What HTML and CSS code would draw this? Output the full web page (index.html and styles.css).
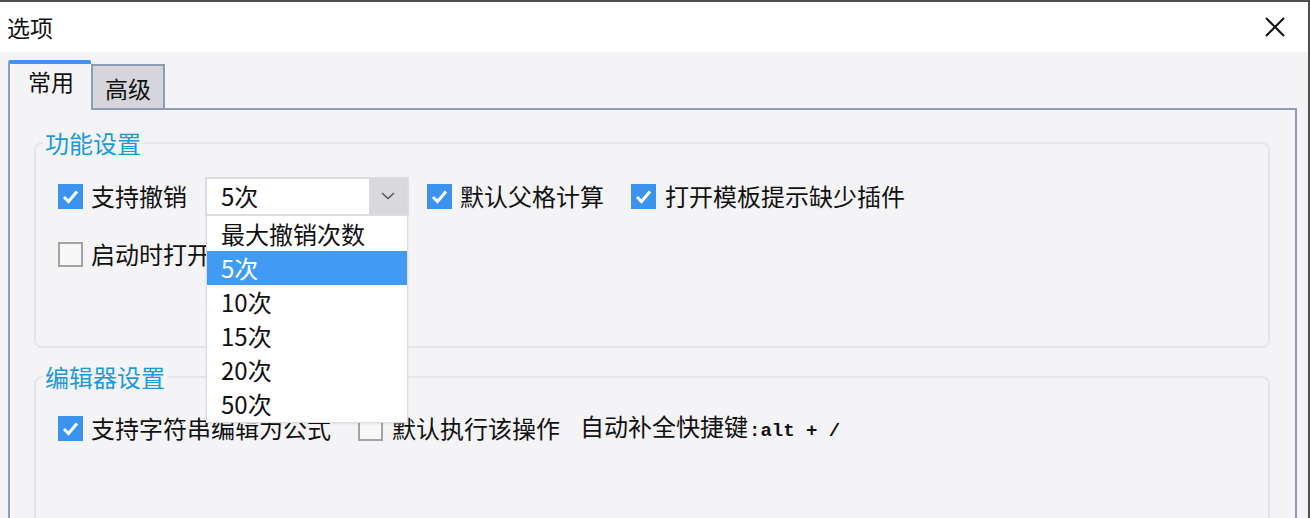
FILE: index.html
```html
<!DOCTYPE html>
<html lang="zh-CN">
<head>
<meta charset="utf-8">
<title>选项</title>
<link rel="stylesheet" href="styles.css">
</head>
<body>
<div class="window">
  <div class="titlebar">
    <span class="title">选项</span>
    <svg class="close" width="20" height="20" viewBox="0 0 20 20"><path d="M1 1 L19 19 M19 1 L1 19" stroke="#111" stroke-width="2" fill="none"/></svg>
  </div>
  <div class="content">
    <div class="tabs">
      <div class="tab tab-active">常用</div>
      <div class="tab tab-inactive">高级</div>
      <div class="tab-fill"></div>
    </div>
    <div class="panel">
      <fieldset class="group group-first">
        <legend>功能设置</legend>
        <div class="group-body body-first">
          <div class="row">
            <span class="cb checked"><svg width="25" height="25" viewBox="0 0 25 25"><path d="M6 13 L10.5 17.5 L19 7.5" stroke="#fff" stroke-width="3" fill="none"/></svg></span>
            <span class="label">支持撤销</span>
            <div class="combo">
              <span class="combo-value">5次</span>
              <span class="combo-arrow"><svg width="14" height="8" viewBox="0 0 14 8"><path d="M1 1 L7 6.5 L13 1" stroke="#555" stroke-width="1.5" fill="none"/></svg></span>
              <ul class="dropdown">
                <li>最大撤销次数</li>
                <li class="selected">5次</li>
                <li>10次</li>
                <li>15次</li>
                <li>20次</li>
                <li>50次</li>
              </ul>
            </div>
            <span class="cb checked gap-18"><svg width="25" height="25" viewBox="0 0 25 25"><path d="M6 13 L10.5 17.5 L19 7.5" stroke="#fff" stroke-width="3" fill="none"/></svg></span>
            <span class="label">默认父格计算</span>
            <span class="cb checked gap-27"><svg width="25" height="25" viewBox="0 0 25 25"><path d="M6 13 L10.5 17.5 L19 7.5" stroke="#fff" stroke-width="3" fill="none"/></svg></span>
            <span class="label label-wide">打开模板提示缺少插件</span>
          </div>
          <div class="row row-second">
            <span class="cb"></span>
            <span class="label">启动时打开最近文件</span>
          </div>
        </div>
      </fieldset>
      <fieldset class="group group-second">
        <legend>编辑器设置</legend>
        <div class="group-body body-second">
          <div class="row">
            <span class="cb checked"><svg width="25" height="25" viewBox="0 0 25 25"><path d="M6 13 L10.5 17.5 L19 7.5" stroke="#fff" stroke-width="3" fill="none"/></svg></span>
            <span class="label">支持字符串编辑为公式</span>
            <span class="cb gap-27"></span>
            <span class="label label-wide">默认执行该操作</span>
            <span class="label shortcut">自动补全快捷键<span class="mono">:alt + /</span></span>
          </div>
        </div>
      </fieldset>
    </div>
  </div>
</div>
</body>
</html>
```

FILE: styles.css
```css
html, body {
  margin: 0;
  padding: 0;
  background: #f4f4f6;
}

body {
  font-family: "Noto Sans CJK SC", "Noto Sans", sans-serif;
  color: #111;
}

.window {
  width: 1310px;
  height: 518px;
  box-sizing: border-box;
  border-top: 2px solid #4f4f4f;
  border-right: 2px solid #4f4f4f;
  overflow: hidden;
  display: flex;
  flex-direction: column;
  background: #f4f4f6;
}

.titlebar {
  height: 50px;
  flex: none;
  background: #ffffff;
  display: flex;
  align-items: center;
  justify-content: space-between;
  padding: 0 23px 0 7px;
}

.title {
  font-size: 23px;
  line-height: 24px;
}

.close {
  display: block;
}

.content {
  flex: 1;
  display: flex;
  flex-direction: column;
  padding: 8px 11px 0 8px;
  min-height: 0;
}

.tabs {
  display: flex;
  align-items: flex-end;
  height: 50px;
  flex: none;
}

.tab {
  box-sizing: border-box;
  font-size: 23px;
  line-height: 24px;
}

.tab-active {
  width: 83px;
  height: 50px;
  border-top: 4px solid #3d95f0;
  border-left: 2px solid #8e9db5;
  background: #f4f4f6;
  padding: 5px 0 0 18px;
  border-radius: 2px 2px 0 0;
}

.tab-inactive {
  width: 74px;
  height: 46px;
  border: 2px solid #8e9db5;
  background: #d5d5db;
  padding: 10px 0 0 12px;
}

.tab-fill {
  flex: 1;
  height: 2px;
  background: #8e9db5;
}

.panel {
  flex: 1;
  border-left: 2px solid #8e9db5;
  border-right: 2px solid #8e9db5;
  padding: 21px 25px 0 24px;
}

.group {
  margin: 0;
  padding: 0;
  border: 2px solid #e7e7eb;
  border-radius: 8px;
  min-width: 0;
}

.group legend {
  margin-left: 7px;
  padding: 0 2px;
  font-size: 24px;
  line-height: 24px;
  color: #1b9ad6;
}

.group-second {
  margin-top: 17px;
  height: 200px;
}

.group-body {
  padding: 21px 0 0 22px;
}

.body-first {
  padding-bottom: 72px;
}

.body-second {
  padding-top: 19px;
}

.row {
  display: flex;
  align-items: center;
  height: 40px;
}

.row-second {
  margin-top: 18px;
}

.cb {
  flex: none;
  width: 25px;
  height: 25px;
  box-sizing: border-box;
  border: 2px solid #a3a3a3;
  background: #f7f7f8;
  display: flex;
  align-items: center;
  justify-content: center;
}

.cb.checked {
  border: none;
  background: #3b93ee;
}

.cb svg {
  display: block;
}

.gap-18 {
  margin-left: 18px;
}

.gap-27 {
  margin-left: 27px;
}

.label {
  font-size: 24px;
  line-height: 28px;
  margin-left: 8px;
  white-space: nowrap;
}

.label-wide {
  margin-left: 9px;
}

.shortcut {
  margin-left: 20px;
  display: flex;
  align-items: baseline;
}

.mono {
  font-family: "Liberation Mono", "DejaVu Sans Mono", monospace;
  font-size: 19px;
  font-weight: bold;
  margin-left: 1px;
}

.combo {
  position: relative;
  margin-left: 18px;
  width: 204px;
  height: 39px;
  box-sizing: border-box;
  border: 2px solid #dcdce0;
  background: #ffffff;
  display: flex;
  align-items: center;
  z-index: 2;
}

.combo-value {
  flex: 1;
  font-size: 24px;
  line-height: 28px;
  padding-left: 14px;
}

.combo-arrow {
  width: 38px;
  align-self: stretch;
  background: #d9d9dd;
  display: flex;
  align-items: center;
  justify-content: center;
}

.combo-arrow svg {
  display: block;
}

.dropdown {
  position: absolute;
  top: 100%;
  left: -1px;
  width: 202px;
  margin: 1px 0 0 0;
  padding: 1px 0;
  list-style: none;
  box-sizing: border-box;
  background: #ffffff;
  border: 1px solid #dedee2;
  box-shadow: 0 1px 2px rgba(0, 0, 0, 0.08);
}

.dropdown li {
  height: 34px;
  line-height: 34px;
  font-size: 24px;
  padding-left: 14px;
  white-space: nowrap;
}

.dropdown li.selected {
  background: #429bf3;
  color: #ffffff;
}
```
